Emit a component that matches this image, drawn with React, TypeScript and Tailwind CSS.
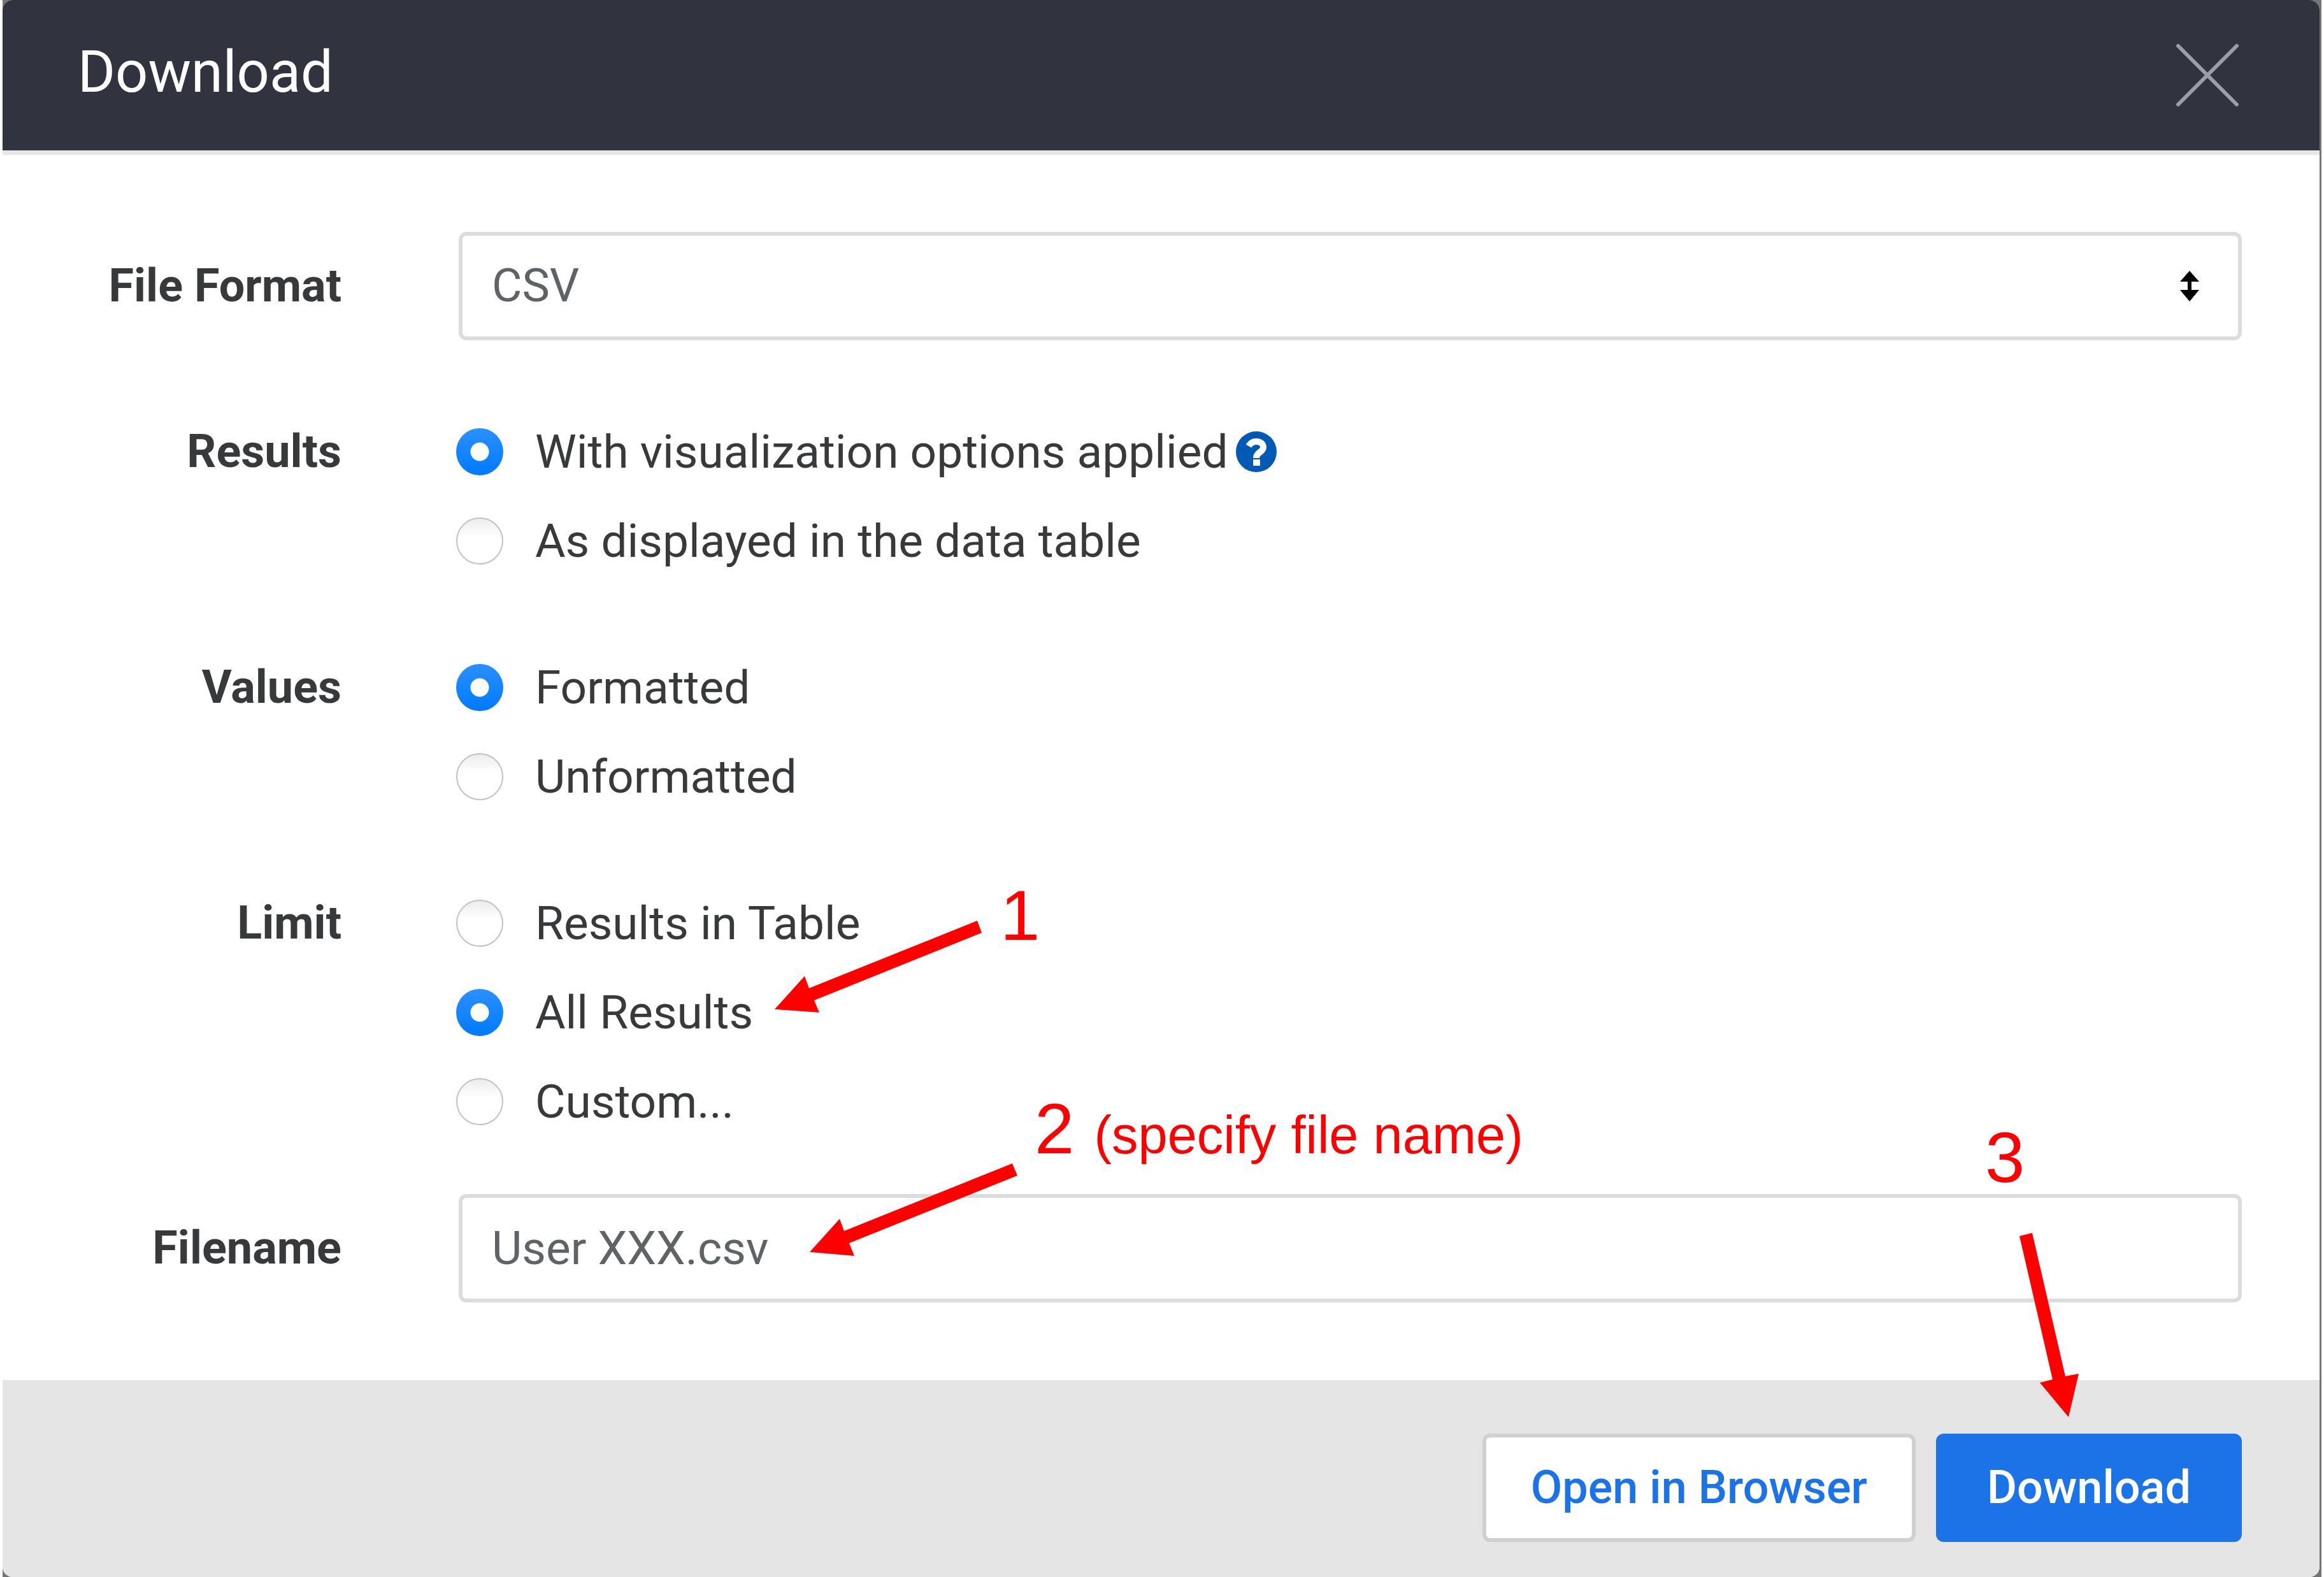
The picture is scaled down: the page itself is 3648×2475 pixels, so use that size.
import { useState } from "react";
import type { ReactNode } from "react";

const ink = "text-[#37393b]";

function Row({ label, htmlFor, children }: { label: string; htmlFor: string; children: ReactNode }) {
  return (
    <div className="grid grid-cols-[532px_1fr] items-center gap-x-[184px]">
      <label htmlFor={htmlFor} className={`text-right text-[72px] leading-[140px] font-bold ${ink}`}>
        {label}
      </label>
      {children}
    </div>
  );
}

function HelpIcon() {
  return (
    <svg viewBox="0 0 64 64" className="size-16" aria-hidden="true">
      <circle cx="32" cy="32" r="32" fill="#0059b2" />
      <path d="M20 23C23 18 27 16 32 16C39 16 43 20 43 25C43 33 32 32 32 42" fill="none" stroke="#fff" strokeWidth="10" />
      <rect x="27" y="44" width="11" height="10" rx="1" fill="#fff" />
    </svg>
  );
}

function RadioGroup({
  name,
  label,
  options,
  initial,
  help,
}: {
  name: string;
  label: string;
  options: string[];
  initial: number;
  help?: number;
}) {
  const [selected, setSelected] = useState(initial);
  return (
    <fieldset className="grid grid-cols-[532px_1fr] gap-x-[180px]" aria-labelledby={`${name}-label`}>
      <span id={`${name}-label`} className={`text-right text-[72px] leading-[140px] font-bold ${ink}`}>
        {label}
      </span>
      <div className="flex flex-col">
        {options.map((option, i) => (
          <div key={option} className="flex items-center gap-3">
            <label className={`flex items-center gap-[50px] text-[73px] leading-[140px] ${ink}`}>
              <input
                type="radio"
                name={name}
                checked={selected === i}
                onChange={() => setSelected(i)}
                className="size-[74px] shrink-0 appearance-none rounded-full border-2 border-[#c2c2c2] bg-linear-to-b from-[#ececec] to-white to-40% checked:border-0 checked:bg-[radial-gradient(circle,#fff_14px,transparent_15px),linear-gradient(#2b90ff,#007aff)]"
              />
              {option}
            </label>
            {help === i && (
              <button type="button" aria-label="Help">
                <HelpIcon />
              </button>
            )}
          </div>
        ))}
      </div>
    </fieldset>
  );
}

function Annotations() {
  return (
    <div className="pointer-events-none absolute inset-0 font-['Liberation_Sans',sans-serif] text-[112px] leading-[128px] text-[#ff0000]">
      <svg viewBox="0 0 3648 2475" className="absolute top-0 left-0 h-[2475px] w-[3648px]" fill="#ff0000" aria-hidden="true">
        <path d="M1216 1584L1263 1532L1270 1551L1534 1445L1541 1464L1278 1570L1286 1589Z" />
        <path d="M1271 1965L1318 1913L1325 1932L1589 1826L1597 1845L1333 1951L1341 1971Z" />
        <path d="M3247 2224L3202 2170L3222 2165L3170 1940L3190 1935L3242 2160L3263 2156Z" />
      </svg>
      <span className="absolute top-[1373px] left-[1570px]">1</span>
      <span className="absolute top-[1708px] left-[1624px] whitespace-nowrap">
        2 <span className="text-[83px]">(specify file name)</span>
      </span>
      <span className="absolute top-[1753px] left-[3116px]">3</span>
    </div>
  );
}

export default function App() {
  const [filename, setFilename] = useState("User XXX.csv");
  return (
    <div className="relative min-h-screen bg-white px-1 font-[Roboto,sans-serif]">
      <div className="bg-[#757575] pr-[3px]">
        <main className="flex min-h-screen flex-col overflow-hidden rounded-2xl bg-white">
          <header className="flex h-[236px] items-center justify-between bg-[#31333f] pr-[126px] pl-[118px]">
            <h1 className="pb-2 text-[90px] leading-[108px] text-white">Download</h1>
            <button type="button" aria-label="Close">
              <svg viewBox="0 0 100 100" className="size-[100px]" aria-hidden="true">
                <path d="M4 4L96 96M96 4L4 96" stroke="#9d9ea4" strokeWidth="6" strokeLinecap="round" />
              </svg>
            </button>
          </header>
          <div className="h-[7px] bg-[#e6e6e6]" />

          <form className="flex flex-1 flex-col pt-[121px] pr-[122px]">
            <Row label="File Format" htmlFor="format">
              <div className="relative">
                <select
                  id="format"
                  className="block h-[170px] w-full appearance-none rounded-xl border-[6px] border-[#dcdcdc] bg-white px-[46px] text-[73px] text-[#606365]"
                >
                  <option>CSV</option>
                </select>
                <svg viewBox="0 0 30 48" className="pointer-events-none absolute top-[61px] right-[67px] h-12 w-[30px]" aria-hidden="true">
                  <path d="M15 0L30 17H18V30H30L15 48L0 30H12V17H0Z" />
                </svg>
              </div>
            </Row>
            <div className="mt-[105px] flex flex-col gap-[90px]">
              <RadioGroup
                name="results"
                label="Results"
                options={["With visualization options applied", "As displayed in the data table"]}
                initial={0}
                help={0}
              />
              <RadioGroup name="values" label="Values" options={["Formatted", "Unformatted"]} initial={0} />
              <RadioGroup name="limit" label="Limit" options={["Results in Table", "All Results", "Custom..."]} initial={1} />
            </div>
            <div className="mt-[75px]">
              <Row label="Filename" htmlFor="filename">
                <input
                  id="filename"
                  type="text"
                  value={filename}
                  onChange={(e) => setFilename(e.target.value)}
                  className="block h-[170px] w-full rounded-xl border-[6px] border-[#dcdcdc] bg-white px-[46px] text-[73px] text-[#606365]"
                />
              </Row>
            </div>
          </form>

          <footer className="flex h-[309px] items-start justify-end gap-8 bg-[#e5e5e5] pt-[84px] pr-[122px]">
            <button
              type="button"
              className="h-[170px] rounded-xl border-[6px] border-[#cfd1d1] bg-white px-[70px] text-[72px] font-medium text-[#1a73e8]"
            >
              Open in Browser
            </button>
            <button type="button" className="h-[170px] rounded-xl bg-[#1c73e8] px-20 text-[72px] font-medium text-white">
              Download
            </button>
          </footer>
        </main>
      </div>
      <Annotations />
    </div>
  );
}
